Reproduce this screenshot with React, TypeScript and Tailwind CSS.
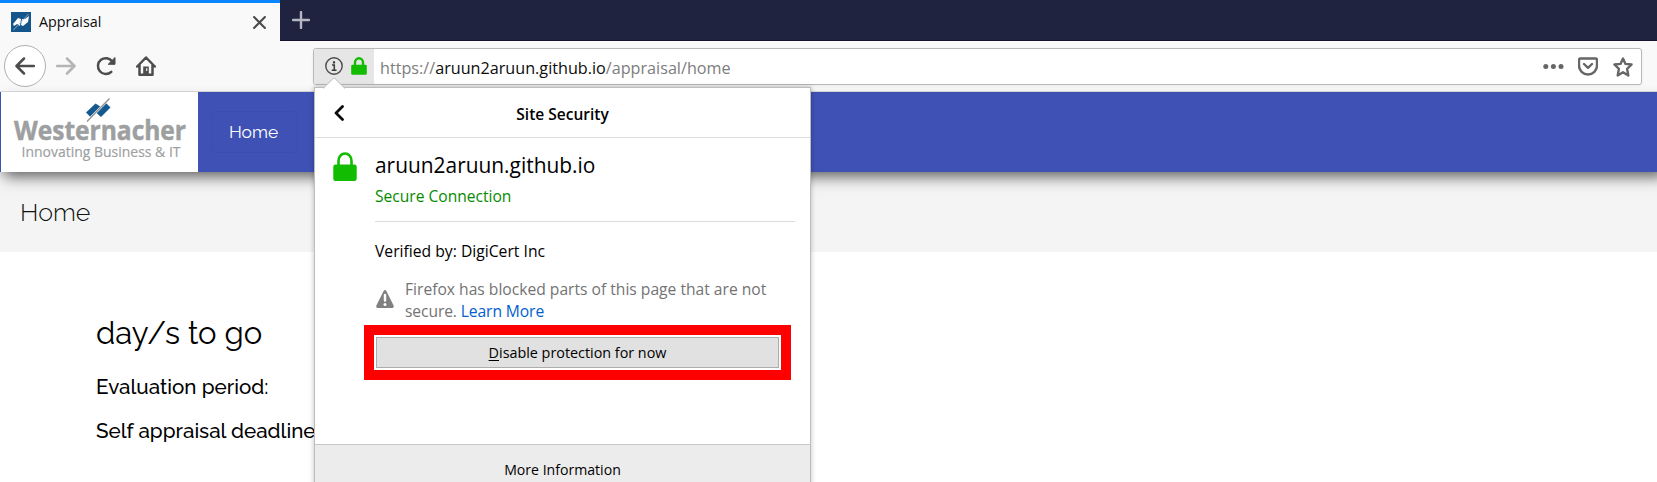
function Mark({ color, line }: { color: string; line: string }) {
  return (
    <>
      <path d="M86 112.500 95.500 103.500 101 107 90.500 117Z" fill={color} />
      <path d="M96 112.500 106 103 110.500 107.500 101 117Z" fill={color} />
      <path d="M87 121.500 109.500 98.500" stroke="#fff" strokeWidth="2.400" />
      <path d="M87 121.500 109.500 98.500" stroke={line} strokeWidth="1.200" />
    </>
  );
}

function Lock({ className }: { className: string }) {
  return (
    <svg className={className} viewBox="0 0 24 29" fill="none">
      <path d="M5.500 14V8.500a6.500 7 0 0 1 13 0V14" stroke="#12bc00" strokeWidth="2.600" />
      <rect x="0.300" y="12.500" width="23.400" height="16.500" rx="2.200" fill="#12bc00" />
    </svg>
  );
}

function SmallLock({ className }: { className: string }) {
  return (
    <svg className={className} viewBox="0 0 16 18" fill="none">
      <path d="M4 9V5.500a4 4.300 0 0 1 8 0V9" stroke="#12bc00" strokeWidth="2.400" />
      <rect x="0.200" y="7.800" width="15.600" height="10" rx="1.300" fill="#12bc00" />
    </svg>
  );
}

function TabStrip() {
  return (
    <div className="flex h-[41px] bg-[#202340]">
      <div className="flex w-[280px] items-center border-t-[3px] border-[#0a84ff] bg-[#f9f9fa] pl-[11px] pr-[14px]">
        <svg className="size-5" viewBox="0 0 20 20">
          <rect width="20" height="20" fill="#14568c" />
          <path d="M2 12 7 6 10 7 9 14 6 12 3 14Z" fill="#fff" />
          <path d="M10 13 11 7 14 7 18 4 17 10 12 14Z" fill="#fff" />
          <path d="M2.500 18 17.500 2" stroke="#9db9d0" strokeWidth="0.800" />
        </svg>
        <span className="ml-2 flex-1 text-[14.3px] text-[#0c0c0d]">Appraisal</span>
        <svg className="size-[13px]" viewBox="0 0 12 12">
          <path d="M1 1 11 11M11 1 1 11" stroke="#4a4a4c" strokeWidth="1.900" strokeLinecap="round" />
        </svg>
      </div>
      <div className="flex flex-1 items-center border-b border-[#14132b] pl-3">
        <svg className="size-[18px]" viewBox="0 0 18 18">
          <path d="M9 1V17M1 9H17" stroke="#b5b6c2" strokeWidth="2.400" strokeLinecap="round" />
        </svg>
      </div>
    </div>
  );
}

function Toolbar() {
  return (
    <div className="flex h-[51px] items-start border-b border-[#dcdcdd] bg-[#f9f9fa] pl-1">
      <div className="mt-1 flex size-[42px] items-center justify-center rounded-full border border-[#b0b0b1] bg-white">
        <svg className="size-5" viewBox="0 0 20 20" fill="none" stroke="#4d4d4f" strokeWidth="2.500" strokeLinecap="round" strokeLinejoin="round">
          <path d="M19 10H2M9 2.500 1.500 10 9 17.500" />
        </svg>
      </div>
      <svg className="ml-[10px] mt-[15px] size-5" viewBox="0 0 20 20" fill="none" stroke="#b5b5b6" strokeWidth="2.500" strokeLinecap="round" strokeLinejoin="round">
        <path d="M1 10H18M11 2.500 18.500 10 11 17.500" />
      </svg>
      <svg className="ml-5 mt-[15px] size-5" viewBox="0 0 20 20" fill="none">
        <path d="M15.300 15.800A7.900 7.900 0 1 1 16.300 5.500" stroke="#4d4d4f" strokeWidth="2.500" strokeLinecap="round" />
        <path d="M19 1.500V8.300H12.200Z" fill="#4d4d4f" stroke="#4d4d4f" strokeLinejoin="round" />
      </svg>
      <svg className="ml-5 mt-[15px] size-5" viewBox="0 0 20 20" fill="none" stroke="#4d4d4f" strokeWidth="2.500" strokeLinecap="round" strokeLinejoin="round">
        <path d="M1.200 10.500 10 1.500 18.800 10.500M3.500 9V18.700H16.500V9" />
        <path d="M7.200 18V10.500H12.800V18Z" fill="#4d4d4f" stroke="none" />
        <path d="M10.700 12.500V14.500" stroke="#f9f9fa" strokeWidth="1.200" />
      </svg>
      <div className="ml-[157px] mt-[7px] flex h-[37px] w-[1329px] items-center rounded-[3px] border border-[#b8b8b9] bg-white shadow-[0_1px_3px_rgba(0,0,0,0.06)]">
        <div className="flex h-full w-[60px] items-center gap-2 rounded-l-sm bg-[#e6e6e6] pl-[11px]">
          <svg className="mb-[2px] size-[18px]" viewBox="0 0 18 18" fill="none">
            <circle cx="9" cy="9" r="8.200" stroke="#4a4a4c" strokeWidth="1.400" />
            <path d="M7 8H9.300V13M6.700 13.200H11.500" stroke="#3a3a3c" strokeWidth="1.500" />
            <rect x="7.900" y="4.200" width="2.200" height="2.200" rx="0.500" fill="#3a3a3c" />
          </svg>
          <SmallLock className="mb-[2px] h-[18px] w-4" />
        </div>
        <span className="ml-[6px] flex-1 pt-[3px] text-[16.180px] text-[#7d7d7e]">
          https://<span className="text-[#0c0c0d]">aruun2aruun.github.io</span>/appraisal/home
        </span>
        <svg className="h-5 w-[21px]" viewBox="0 0 21 20" fill="#666667">
          <circle cx="2.800" cy="9.500" r="2.500" /><circle cx="10.400" cy="9.500" r="2.500" /><circle cx="18" cy="9.500" r="2.500" />
        </svg>
        <svg className="ml-[14px] size-5" viewBox="0 0 20 20" fill="none" stroke="#666667" strokeWidth="2.400" strokeLinecap="round" strokeLinejoin="round">
          <path d="M2.500 1.500H17.500Q19 1.500 19 3V8.500A9 9 0 0 1 1 8.500V3Q1 1.500 2.500 1.500ZM6 7 10 10.800 14 7" />
        </svg>
        <svg className="ml-[15px] mr-2 size-5" viewBox="0 0 20 20" fill="none" stroke="#666667" strokeWidth="2.400" strokeLinejoin="round">
          <path d="M10 1.500 12.500 6.900 18.600 7.500 14.100 11.800 15.300 18.500 10 15.300 4.700 18.500 5.900 11.800 1.400 7.500 7.500 6.900Z" />
        </svg>
      </div>
    </div>
  );
}

function SitePage() {
  return (
    <div className="h-[390px] bg-white font-[Raleway,'Open_Sans',sans-serif]">
      <div className="relative z-10 -mr-3 flex h-20 items-center bg-[#3f51b5] pl-px shadow-[0_10px_14px_-5px_rgba(0,0,0,0.5),0_4px_12px_-2px_rgba(0,0,0,0.2)]">
        <svg className="h-20 w-[197px] bg-white" viewBox="1 92 197 80" fontFamily="Open Sans, sans-serif" fill="#9d9fa1">
          <Mark color="#14598f" line="#8b8d90" />
          <text x="14" y="139.500" fontSize="26" fontWeight="700" stroke="#9d9fa1" strokeWidth="0.500" textLength="172" lengthAdjust="spacingAndGlyphs">Westernacher</text>
          <text x="21.500" y="157.300" fontSize="14.500" stroke="#9d9fa1" strokeWidth="0.200" textLength="159" lengthAdjust="spacingAndGlyphs">Innovating Business &amp; IT</text>
        </svg>
        <div className="ml-[13px] flex h-[42px] w-[87px] items-center justify-center rounded border border-[#3c4daf] pr-[2px] pt-px text-[17.400px] text-white">Home</div>
      </div>
      <div className="flex h-20 items-center bg-[#f4f4f4] pl-5 pt-[2px] text-[25px] font-light text-[#111111]">Home</div>
      <div className="pl-24 pt-[59px] leading-[44px] text-black">
        <div className="text-[31.100px]">day/s to go</div>
        <div className="mt-[10px] text-[20.600px] font-medium">Evaluation period:</div>
        <div className="text-[20.600px] font-medium">Self appraisal deadline</div>
      </div>
    </div>
  );
}

function SecurityPanel() {
  return (
    <div className="absolute left-[314px] top-[87px] z-20 flex h-[420px] w-[497px] flex-col border border-[#bdbdbe] bg-white text-[15.580px] leading-[22px] text-black shadow-[0_0_5px_rgba(0,0,0,0.25)]">
      <svg className="absolute -top-[11px] left-2 h-3 w-[22px]" viewBox="0 0 22 12">
        <path d="M0 11.500 11 0.700 22 11.500" fill="#fff" stroke="#bdbdbe" />
        <path d="M1 12H21" stroke="#fff" strokeWidth="2" />
      </svg>
      <div className="flex h-[50px] items-center border-b border-[#dcdcdd] px-[19px]">
        <svg className="h-4 w-[10px]" viewBox="0 0 10 16" fill="none">
          <path d="M8.500 1.500 2 8 8.500 14.500" stroke="#0c0c0d" strokeWidth="2.800" strokeLinecap="round" strokeLinejoin="round" />
        </svg>
        <h1 className="mr-[10px] flex-1 pt-[3px] text-center text-[15.500px] font-semibold">Site Security</h1>
      </div>
      <div className="flex h-[306px] pl-[18px] pt-[12px]">
        <Lock className="mt-[2px] h-[29px] w-6" />
        <div className="ml-[18px] w-[420px]">
          <div className="text-[20.900px] leading-[30px]">aruun2aruun.github.io</div>
          <div className="mt-[5px] text-[#058b00]">Secure Connection</div>
          <div className="mt-[14px] border-t border-[#dcdcdd] pt-[18px] text-[15.700px]">Verified by: DigiCert Inc</div>
          <div className="mt-4 flex">
            <svg className="ml-px mt-3 h-[18px] w-[18px]" viewBox="0 0 18 18">
              <path d="M7.600 1Q9 -0.800 10.400 1L17.600 15.500Q18.200 17.800 16 18H2Q-0.200 17.800 0.400 15.500Z" fill="#808081" />
              <path d="M9 5V10.500" stroke="#fff" strokeWidth="2.400" strokeLinecap="round" />
              <circle cx="9" cy="14.500" r="1.500" fill="#fff" />
            </svg>
            <p className="ml-[11px] text-[15.630px] text-[#737374]">
              Firefox has blocked parts of this page that are not<br />
              <span className="tracking-[-0.1px]">secure. <a className="text-[#0060cf]">Learn More</a></span>
            </p>
          </div>
          <div className="-ml-[11px] mt-[3px] h-[55px] w-[427px] border-[10px] border-[#ff0000] p-[2px]">
            <button className="block h-[31px] w-full border border-[#adadad] bg-[#e1e1e1] text-[14.350px] leading-[29px]">
              <span className="underline underline-offset-2">D</span>isable protection for now
            </button>
          </div>
        </div>
      </div>
      <div className="flex-1 border-t border-[#c9c9ca] bg-[#ececec] pt-[14px] text-center text-[14.100px]">
        More Information
      </div>
    </div>
  );
}

export default function App() {
  return (
    <div className="relative h-[482px] w-[1657px] overflow-hidden font-['Open_Sans',sans-serif]">
      <TabStrip />
      <Toolbar />
      <SitePage />
      <SecurityPanel />
    </div>
  );
}
